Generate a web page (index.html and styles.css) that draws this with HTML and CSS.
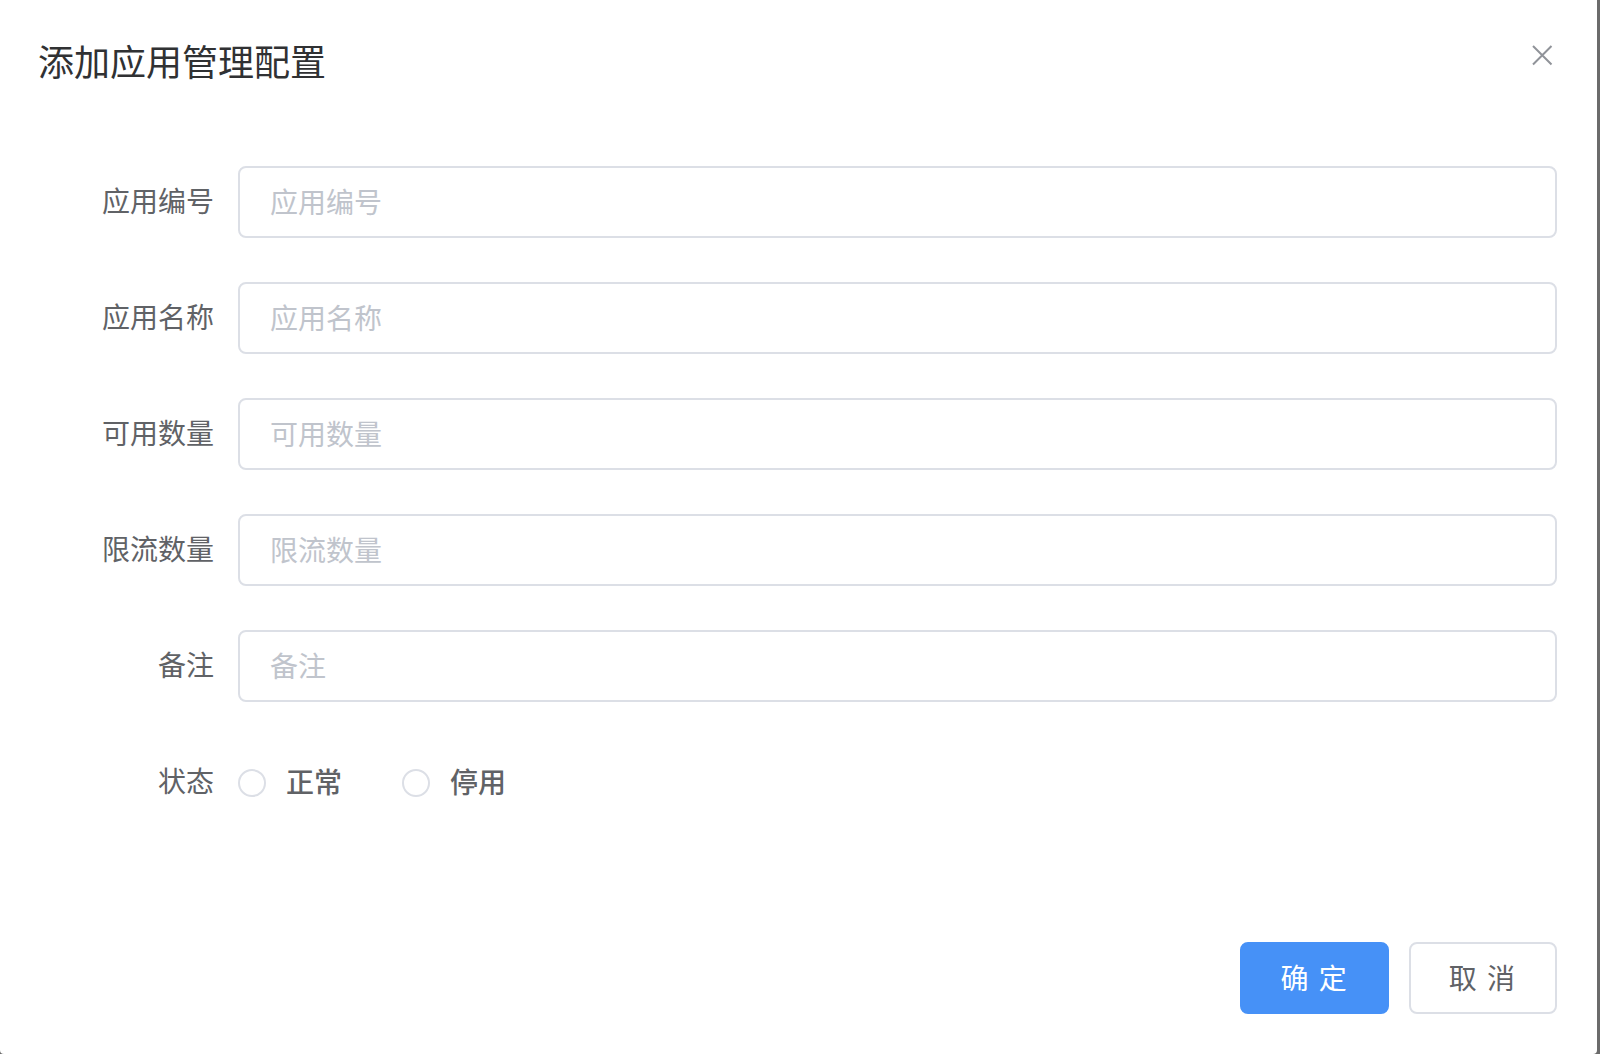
FILE: index.html
```html
<!DOCTYPE html>
<html lang="zh-CN">
<head>
<meta charset="utf-8">
<title>添加应用管理配置</title>
<link rel="stylesheet" href="styles.css">
</head>
<body>
<div class="dialog">
  <div class="dialog-header">
    <span class="dialog-title">添加应用管理配置</span>
    <button class="close-btn" type="button" aria-label="Close">
      <svg width="32" height="32" viewBox="0 0 32 32"><path d="M8 10 L26.5 28.5 M26.5 10 L8 28.5" stroke="#909399" stroke-width="2" fill="none"/></svg>
    </button>
  </div>
  <div class="dialog-body">
    <div class="form-item">
      <label class="form-label">应用编号</label>
      <input class="form-input" type="text" placeholder="应用编号">
    </div>
    <div class="form-item">
      <label class="form-label">应用名称</label>
      <input class="form-input" type="text" placeholder="应用名称">
    </div>
    <div class="form-item">
      <label class="form-label">可用数量</label>
      <input class="form-input" type="text" placeholder="可用数量">
    </div>
    <div class="form-item">
      <label class="form-label">限流数量</label>
      <input class="form-input" type="text" placeholder="限流数量">
    </div>
    <div class="form-item">
      <label class="form-label">备注</label>
      <input class="form-input" type="text" placeholder="备注">
    </div>
    <div class="form-item">
      <label class="form-label">状态</label>
      <div class="radio-group">
        <label class="radio"><span class="radio-circle"></span><span class="radio-label">正常</span></label>
        <label class="radio"><span class="radio-circle"></span><span class="radio-label">停用</span></label>
      </div>
    </div>
  </div>
  <div class="dialog-footer">
    <button class="btn btn-primary" type="button">确&nbsp;定</button>
    <button class="btn" type="button">取&nbsp;消</button>
  </div>
</div>
</body>
</html>
```
FILE: styles.css
```css
html, body {
  margin: 0;
  padding: 0;
}
body {
  width: 1600px;
  height: 1054px;
  overflow: hidden;
  background: #6b6b6b;
  font-family: "Noto Sans CJK SC", "Noto Sans", sans-serif;
}
.dialog {
  width: 1597px;
  background: #fff;
  border-radius: 0 0 4px 4px;
  box-sizing: border-box;
}
.dialog-header {
  display: flex;
  justify-content: space-between;
  align-items: flex-start;
  padding: 36px 40px 22px 38px;
}
.dialog-title {
  font-size: 36px;
  line-height: 48px;
  color: #303133;
}
.close-btn {
  width: 32px;
  height: 32px;
  padding: 0;
  margin: 0;
  border: none;
  background: transparent;
  display: block;
}
.close-btn svg {
  display: block;
}
.dialog-body {
  padding: 60px 40px 60px 38px;
}
.form-item {
  display: flex;
  margin-bottom: 44px;
}
.form-label {
  width: 200px;
  flex: none;
  box-sizing: border-box;
  padding-right: 24px;
  padding-bottom: 4px;
  text-align: right;
  font-size: 28px;
  line-height: 68px;
  color: #606266;
}
.form-input {
  flex: 1;
  min-width: 0;
  height: 72px;
  box-sizing: border-box;
  border: 2px solid #dcdfe6;
  border-radius: 8px;
  padding: 0 30px 3px;
  margin: 0;
  font-family: "Noto Sans CJK SC", "Noto Sans", sans-serif;
  font-size: 28px;
  color: #606266;
  background: #fff;
  outline: none;
}
.form-input::placeholder {
  color: #c0c4cc;
}
.radio-group {
  display: flex;
  align-items: center;
  height: 72px;
}
.radio {
  display: flex;
  align-items: center;
  margin-right: 60px;
}
.radio-circle {
  width: 28px;
  height: 28px;
  box-sizing: border-box;
  border: 2px solid #dcdfe6;
  border-radius: 50%;
  background: #fff;
  margin-top: 2px;
}
.radio-label {
  padding-left: 20px;
  padding-bottom: 3px;
  font-size: 28px;
  font-weight: 500;
  color: #606266;
}
.dialog-footer {
  display: flex;
  justify-content: flex-end;
  gap: 20px;
  padding: 20px 40px 40px;
}
.btn {
  height: 72px;
  padding: 0 38px 3px;
  box-sizing: border-box;
  border: 2px solid #dcdfe6;
  border-radius: 8px;
  background: #fff;
  color: #606266;
  font-family: "Noto Sans CJK SC", "Noto Sans", sans-serif;
  font-size: 28px;
  letter-spacing: 2px;
  margin: 0;
}
.btn-primary {
  background: #4691f7;
  border-color: #4691f7;
  color: #fff;
}
```
